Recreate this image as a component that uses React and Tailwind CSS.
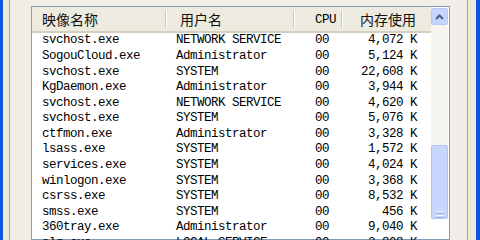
const ROWS = [
  ["svchost.exe", "NETWORK SERVICE", "00", "4,072 K"],
  ["SogouCloud.exe", "Administrator", "00", "5,124 K"],
  ["svchost.exe", "SYSTEM", "00", "22,608 K"],
  ["KgDaemon.exe", "Administrator", "00", "3,944 K"],
  ["svchost.exe", "NETWORK SERVICE", "00", "4,620 K"],
  ["svchost.exe", "SYSTEM", "00", "5,076 K"],
  ["ctfmon.exe", "Administrator", "00", "3,328 K"],
  ["lsass.exe", "SYSTEM", "00", "1,572 K"],
  ["services.exe", "SYSTEM", "00", "4,024 K"],
  ["winlogon.exe", "SYSTEM", "00", "3,368 K"],
  ["csrss.exe", "SYSTEM", "00", "8,532 K"],
  ["smss.exe", "SYSTEM", "00", "456 K"],
  ["360tray.exe", "Administrator", "00", "9,040 K"],
  ["alg.exe", "LOCAL SERVICE", "00", "3,808 K"],
];

const MONO = "font-['Liberation_Mono',monospace] text-[12.5px] tracking-[-0.5px] text-black whitespace-pre";
const CJK = "font-['Noto_Sans_CJK_SC',sans-serif] text-[14px] text-[#111]";

function Divider() {
  return (
    <div className="absolute right-0 top-[4px] bottom-[3px] flex">
      <div className="w-px bg-[#C9C6B5]" />
      <div className="w-px bg-white" />
    </div>
  );
}

function Scrollbar() {
  return (
    <div className="flex w-[17px] flex-col bg-[#F6F5EF]">
      <div className="flex h-[17px] items-center justify-center rounded-[2px] border border-[#B7C9F3] bg-[#C5D4FB]">
        <svg width="9" height="6" viewBox="0 0 9 6">
          <path d="M1 5 L4.5 1.5 L8 5" stroke="#4C5F86" strokeWidth="2" fill="none" />
        </svg>
      </div>
      <div className="h-[120px]" />
      <div className="flex flex-1 flex-col items-center rounded-[2px] border border-[#B0C5F4] bg-[#C7D6FC] pt-[65px]">
        <div className="flex flex-col gap-[1px]">
          <div className="h-px w-[8px] bg-[#EEF3FF]" />
          <div className="h-px w-[8px] bg-[#9DB2E8]" />
          <div className="h-px w-[8px] bg-[#EEF3FF]" />
          <div className="h-px w-[8px] bg-[#9DB2E8]" />
        </div>
      </div>
    </div>
  );
}

export default function App() {
  return (
    <div className="flex h-[240px] w-[480px] overflow-hidden bg-[#ECE9D8]">
      <div className="w-[3px] bg-[#0C55E3]" />
      <div className="w-[6px] bg-[#ECE9D8]" />
      <div className="w-px bg-[#A9A89C]" />
      <div className="flex flex-1 bg-[#F0EEE6] pl-[21px] pr-[17px] pt-[6px]">
        <div className="flex flex-1 border border-[#7F9DB9] bg-white">
          <div className="flex flex-1 flex-col">
            <div className="flex h-[26px] shrink-0 border-b-2 border-[#D4D0BF] bg-[#EDEBE0]">
              <div className="relative flex w-[135px] items-center pl-[10px]">
                <span className={CJK}>映像名称</span>
                <Divider />
              </div>
              <div className="relative flex w-[128px] items-center pl-[13px]">
                <span className={CJK}>用户名</span>
                <Divider />
              </div>
              <div className="relative flex w-[48px] items-center pl-[20px]">
                <span className={`mt-[3px] ${MONO}`}>CPU</span>
                <Divider />
              </div>
              <div className="relative flex w-[82px] items-center justify-end pr-[9px]">
                <span className={CJK}>内存使用</span>
              </div>
              <div className="flex-1" />
            </div>
            <div className="flex flex-col">
              {ROWS.map((r, i) => (
                <div key={i} className="flex h-[15.58px] shrink-0 items-center">
                  <div className={`w-[135px] pl-[10px] ${MONO}`}>{r[0]}</div>
                  <div className={`w-[128px] pl-[9px] ${MONO}`}>{r[1]}</div>
                  <div className={`w-[48px] pl-[20px] ${MONO}`}>{r[2]}</div>
                  <div className={`w-[82px] pr-[8px] text-right ${MONO}`}>{r[3]}</div>
                </div>
              ))}
            </div>
          </div>
          <div className="pt-px pr-px">
            <Scrollbar />
          </div>
        </div>
      </div>
      <div className="w-px bg-[#A9A89C]" />
      <div className="w-[8px] bg-[#ECE9D8]" />
      <div className="w-[4px] bg-[#0C55E3]" />
    </div>
  );
}
